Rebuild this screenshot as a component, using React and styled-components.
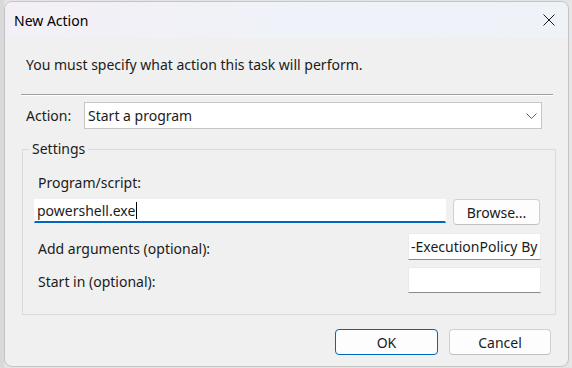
import React from "react";
import styled, { createGlobalStyle } from "styled-components";

const Global = createGlobalStyle`
  html, body { margin: 0; padding: 0; }
  body {
    width: 572px; height: 368px; overflow: hidden;
    background: #dcdcdc;
    font-family: "Segoe UI", "Noto Sans", "Open Sans", sans-serif;
    font-size: 14px;
    color: #1b1b1b;
  }
`;

const Page = styled.div`
  display: flex;
  width: 572px;
  height: 368px;
  background: #e4e4e4;
`;

const Strip = styled.div`
  width: ${(p) => p.$w}px;
  flex: none;
  background: ${(p) => p.$bg};
`;

const Window = styled.div`
  width: 565px;
  height: 366px;
  margin-top: 1px;
  box-sizing: border-box;
  border: 1px solid #c4c4c4;
  border-radius: 8px;
  background: #f0f0f0;
  overflow: hidden;
  display: flex;
  flex-direction: column;
  flex: none;
`;

const TitleBar = styled.div`
  height: 36px;
  flex: none;
  display: flex;
  align-items: center;
  padding-left: 9px;
  background: linear-gradient(90deg, #f4eff6 0%, #f0f2f8 40%, #eef3f8 100%);
`;

const Title = styled.div`
  font-size: 14px;
  color: #000;
`;

const Close = styled.svg`
  margin-left: auto;
  margin-right: 13px;
  width: 12px;
  height: 12px;
`;

const Body = styled.div`
  display: flex;
  flex-direction: column;
  padding: 0 0 0 16px;
  flex: 1;
`;

const Instruction = styled.div`
  margin: 17px 0 0 5px;
  height: 20px;
  line-height: 20px;
`;

const Separator = styled.div`
  margin-top: 19px;
  width: 532px;
  height: 1px;
  background: #a0a0a0;
  border-bottom: 1px solid #ffffff;
`;

const ActionRow = styled.div`
  display: flex;
  align-items: center;
  margin-top: 6px;
`;

const Label = styled.div`
  margin-left: ${(p) => p.$ml || 0}px;
  margin-top: ${(p) => p.$mt || 0}px;
  width: ${(p) => (p.$w ? p.$w + "px" : "auto")};
  flex: none;
  line-height: 20px;
`;

const Combo = styled.div`
  width: 458px;
  height: 27px;
  box-sizing: border-box;
  border: 1px solid #c6c6c6;
  background: #fff;
  display: flex;
  align-items: center;
  padding-left: 3px;
  padding-right: 4px;
`;

const Chevron = styled.svg`
  margin-left: auto;
  width: 11px;
  height: 6px;
`;

const Group = styled.fieldset`
  margin: 10px 0 0 1px;
  padding: 0;
  width: 534px;
  height: 176px;
  box-sizing: border-box;
  border: 1px solid #dadada;
  border-radius: 0;
  display: flex;
  flex-direction: column;
  min-inline-size: auto;
`;

const Legend = styled.legend`
  margin-left: 6px;
  padding: 0 3px;
  line-height: 20px;
`;

const GroupLabel = styled.div`
  margin: 14px 0 0 15px;
  line-height: 20px;
`;

const ProgramRow = styled.div`
  display: flex;
  align-items: flex-start;
  margin-top: 6px;
  margin-left: 11px;
`;

const TextInput = styled.div`
  width: ${(p) => p.$w}px;
  height: ${(p) => p.$h}px;
  box-sizing: border-box;
  background: #fff;
  border: 1px solid ${(p) => (p.$focus ? "#fff" : "#eaeaea")};
  border-bottom: ${(p) => (p.$focus ? "2px solid #0067c0" : "1px solid #8c8c8c")};
  display: flex;
  align-items: center;
  padding-left: 2px;
  white-space: nowrap;
  overflow: hidden;
  flex: none;
  line-height: 20px;
`;

const Caret = styled.span`
  display: inline-block;
  width: 1px;
  height: 17px;
  background: #000;
  margin-left: 1px;
`;

const Button = styled.div`
  width: ${(p) => p.$w}px;
  height: ${(p) => p.$h}px;
  margin-left: ${(p) => p.$ml || 0}px;
  box-sizing: border-box;
  border: 1px solid ${(p) => (p.$primary ? "#0067c0" : "#d0d0d0")};
  border-bottom-color: ${(p) => (p.$primary ? "#0067c0" : "#c0c0c0")};
  border-radius: 4px;
  background: #fdfdfd;
  display: flex;
  align-items: center;
  justify-content: center;
  flex: none;
  color: #1b1b1b;
`;

const FieldRow = styled.div`
  display: flex;
  align-items: flex-start;
  margin-top: ${(p) => p.$mt}px;
`;

const Footer = styled.div`
  display: flex;
  margin-top: 14px;
  margin-left: 314px;
`;

export default function App() {
  return (
    <>
      <Global />
      <Page>
        <Strip $w={4} $bg="#d9d9d9" />
        <Window>
          <TitleBar>
            <Title>New Action</Title>
            <Close viewBox="0 0 12 12">
              <path d="M0.5 0.5 L11.5 11.5 M11.5 0.5 L0.5 11.5" stroke="#1a1a1a" strokeWidth="1" fill="none" />
            </Close>
          </TitleBar>
          <Body>
            <Instruction>You must specify what action this task will perform.</Instruction>
            <Separator />
            <ActionRow>
              <Label $ml={5} $w={58}>Action:</Label>
              <Combo>
                Start a program
                <Chevron viewBox="0 0 11 6">
                  <path d="M0.5 0.5 L5.5 5.5 L10.5 0.5" stroke="#5f5f5f" strokeWidth="1" fill="none" />
                </Chevron>
              </Combo>
            </ActionRow>
            <Group>
              <Legend>Settings</Legend>
              <GroupLabel>Program/script:</GroupLabel>
              <ProgramRow>
                <TextInput $w={412} $h={24} $focus>
                  powershell.exe<Caret />
                </TextInput>
                <Button $w={87} $h={26} $ml={7}>Browse...</Button>
              </ProgramRow>
              <FieldRow $mt={8}>
                <Label $ml={15} $w={370} $mt={6}>Add arguments (optional):</Label>
                <TextInput $w={133} $h={27}>-ExecutionPolicy By</TextInput>
              </FieldRow>
              <FieldRow $mt={7}>
                <Label $ml={15} $w={370} $mt={5}>Start in (optional):</Label>
                <TextInput $w={133} $h={26} />
              </FieldRow>
            </Group>
            <Footer>
              <Button $w={103} $h={26} $primary>OK</Button>
              <Button $w={102} $h={26} $ml={11}>Cancel</Button>
            </Footer>
          </Body>
        </Window>
        <Strip $w={3} $bg="#e6e6e6" />
      </Page>
    </>
  );
}
